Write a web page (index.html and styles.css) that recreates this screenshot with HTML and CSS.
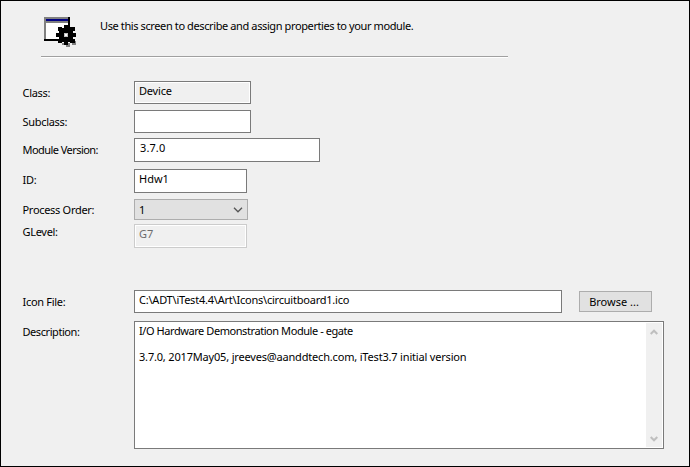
FILE: index.html
```html
<!DOCTYPE html>
<html lang="en">
<head>
<meta charset="utf-8">
<title>Module Properties</title>
<link rel="stylesheet" href="styles.css">
</head>
<body>
<main class="panel">
  <header class="intro">
    <svg class="module-icon" width="32" height="30" viewBox="0 0 32 30" shape-rendering="crispEdges" aria-hidden="true">
      <path fill="#808080" d="M0 0h24v6H2v16H0z"/>
      <path fill="#000080" d="M2 2h22v2H2z"/>
      <path fill="#fff" d="M2 6h22v16H2z"/>
      <path fill="#000" d="M24 0h2v22h-2zM0 22h16v2H0z"/>
      <path fill="#808080" d="M22 26h4v4h-4zM28 24h4v4h-4zM18 26h2v2h-2z"/>
      <path fill="#000" d="M15 11h14v14H15zM20 8h4v20h-4zM12 16h20v4H12zM14 10h4v4h-4zM26 10h5v4h-5zM14 22h4v4h-4zM26 22h5v4h-5z"/>
      <path fill="#c0c0c0" d="M20 16h4v4h-4z"/>
      <path fill="#fff" d="M21 17h2v2h-2z"/>
    </svg>
    <p class="intro-text">Use this screen to describe and assign properties to your module.</p>
  </header>
  <hr class="rule">
  <form class="form">
    <div class="row class-row"><label>Class:</label><div class="field readonly">Device</div></div>
    <div class="row subclass-row"><label>Subclass:</label><div class="field"></div></div>
    <div class="row version-row"><label>Module Version:</label><div class="field">3.7.0</div></div>
    <div class="row id-row"><label>ID:</label><div class="field">Hdw1</div></div>
    <div class="row order-row"><label>Process Order:</label><div class="select"><span>1</span>
      <svg width="10" height="6" viewBox="0 0 10 6" aria-hidden="true"><path d="M1 .8l4 4 4-4" fill="none" stroke="#555" stroke-width="1.3"/></svg></div></div>
    <div class="row level-row"><label>GLevel:</label><div class="field disabled">G7</div></div>
    <div class="row file-row"><label>Icon File:</label><div class="field"><span>C:\ADT\iTest4.4\Art\Icons\circuitboard1.ico</span></div><button type="button">Browse ...</button></div>
    <div class="row description-row"><label>Description:</label>
      <div class="field area">
        <div class="lines"><p class="line-one">I/O Hardware Demonstration Module - egate</p><p class="line-two">3.7.0, 2017May05, jreeves@aanddtech.com, iTest3.7 initial version</p></div>
        <div class="scrollbar">
          <svg width="8" height="6" viewBox="0 0 8 6" aria-hidden="true"><path d="M.7 5L4 1.7 7.3 5" fill="none" stroke="#bfbfbf" stroke-width="2"/></svg>
          <svg width="8" height="6" viewBox="0 0 8 6" aria-hidden="true"><path d="M.7 1L4 4.3 7.3 1" fill="none" stroke="#bfbfbf" stroke-width="2"/></svg>
        </div>
      </div>
    </div>
  </form>
</main>
</body>
</html>
```
FILE: styles.css
```css
* { box-sizing: border-box; }
body { margin: 0; font: 11px/13px "Noto Sans", sans-serif; color: #000; }
p { margin: 0; white-space: nowrap; }
.panel { width: 690px; height: 467px; border: 1px solid #000; background: #f0f0f0; overflow: hidden; }
.intro { display: flex; height: 55px; padding: 16px 0 0 43px; }
.module-icon { flex: none; }
.intro-text { margin: 2px 0 0 24px; letter-spacing: -.39px; }
.rule { width: 467px; height: 2px; margin: 0 0 0 40px; border: 0; border-top: 1px solid #a0a0a0; background: #fff; }
.form { padding: 23px 0 0 21px; }
.row { display: flex; align-items: flex-start; }
label { flex: none; width: 112px; padding: 5px 0 0 .5px; white-space: nowrap; letter-spacing: -.3px; }
.field { width: 117px; height: 23px; padding: 2px 4px; border: 1px solid #7a7a7a; background: #fff; white-space: nowrap; }
.readonly { background: #f0f0f0; box-shadow: inset 0 0 0 1px #fff; letter-spacing: -.2px; }
.subclass-row { margin-top: 6px; }
.version-row { margin-top: 5px; }
.version-row label { letter-spacing: -.55px; }
.version-row .field { width: 186px; height: 24px; padding-left: 5px; letter-spacing: .1px; }
.id-row { margin-top: 7px; }
.id-row .field { width: 113px; height: 24px; }
.id-row label { padding-top: 4px; }
.order-row { margin-top: 6px; }
.order-row label { padding-top: 4px; }
.select { display: flex; align-items: center; justify-content: space-between; width: 114px; height: 21px; padding: 0 4px; border: 1px solid #adadad; background: #e1e1e1; }
.level-row { margin-top: 4px; }
.level-row label { padding-top: 1px; }
.level-row .field { width: 113px; height: 24px; }
.disabled { border-color: #ccc; background: #f0f0f0; box-shadow: inset 0 0 0 1px #fff; color: #6d6d6d; }
.file-row { margin-top: 42px; }
.file-row .field { width: 428px; letter-spacing: -.22px; }
button { width: 73px; height: 21px; margin: 1px 0 0 17px; padding: 0 3px 0 0; border: 1px solid #adadad; background: #e1e1e1; color: #000; font: inherit; }
.description-row { margin-top: 8px; }
.description-row label { padding-top: 4px; letter-spacing: -.43px; }
.area { display: flex; justify-content: space-between; width: 530px; height: 128px; padding: 1px 1px 1px 4px; }
.line-one { margin: 1px 0 13px; letter-spacing: -.43px; }
.line-two { letter-spacing: -.18px; }
.scrollbar { display: flex; flex-direction: column; align-items: center; justify-content: space-between; width: 16px; padding: 6px 0 5px; background: #f0f0f0; }
```
